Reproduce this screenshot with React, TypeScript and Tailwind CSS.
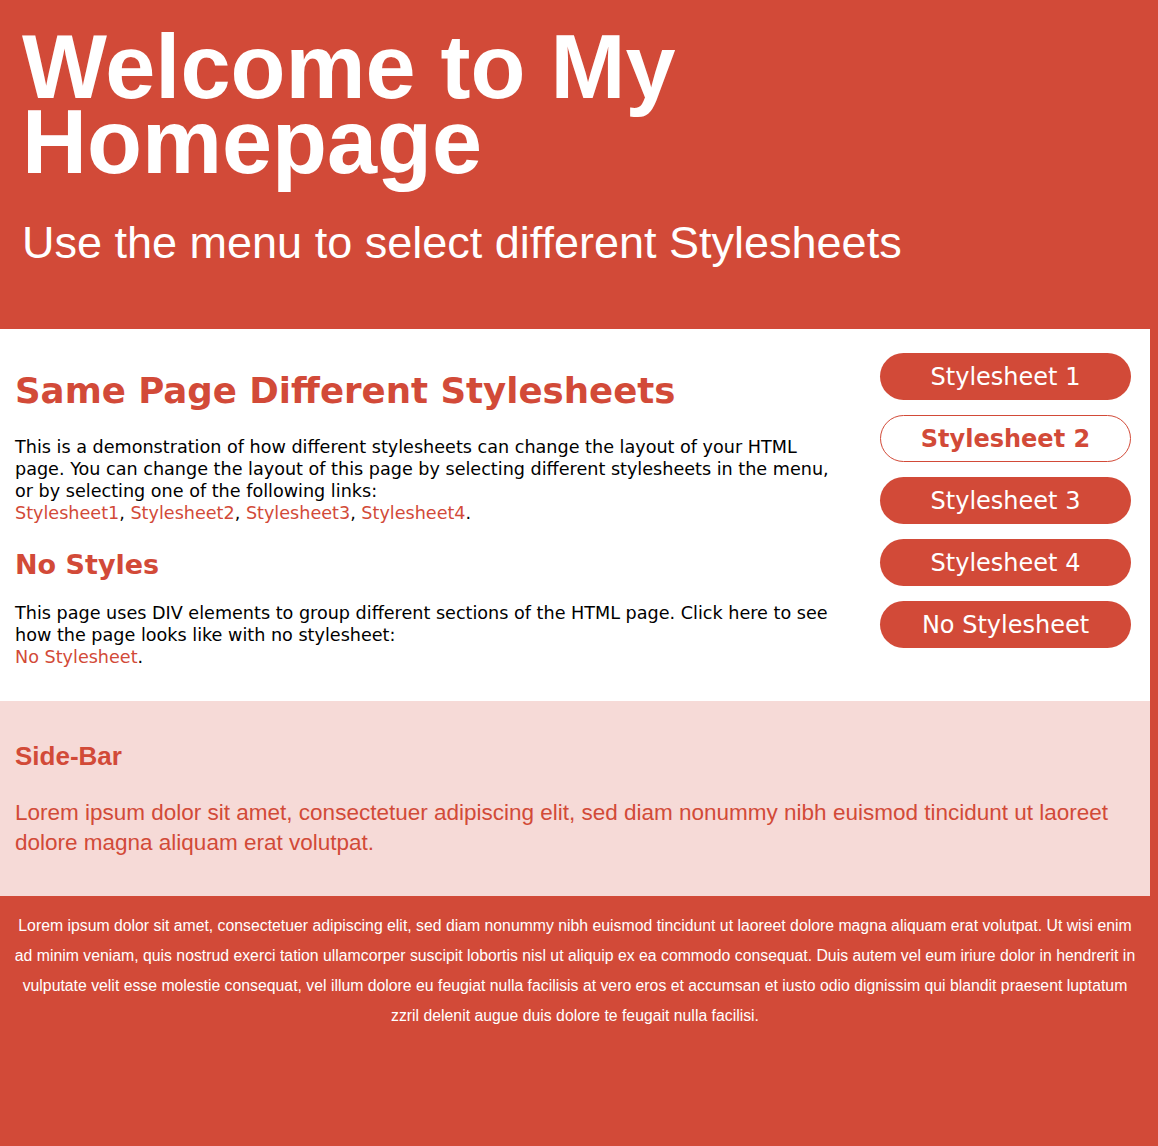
export default function App() {
  const links = ["Stylesheet1", "Stylesheet2", "Stylesheet3", "Stylesheet4"];
  const menu = ["Stylesheet 1", "Stylesheet 2", "Stylesheet 3", "Stylesheet 4", "No Stylesheet"];

  return (
    <div className="min-h-[1146px] bg-[#d24a38] font-['Liberation_Sans',Arial,sans-serif]">
      <div className="w-[1150px]">
        {/* Header */}
        <header className="h-[329px] px-[22px] pt-[30px] text-white">
          <h1 className="max-w-[700px] text-[90px] font-bold leading-[75px]">Welcome to My Homepage</h1>
          <p className="mt-[37px] text-[45px] leading-[52px]">Use the menu to select different Stylesheets</p>
        </header>

        {/* Main content + menu */}
        <main className="flex bg-white pb-[33px] font-['DejaVu_Sans',Verdana,sans-serif]">
          <div className="w-[845px] pl-[15px] pt-[40px]">
            <h2 className="whitespace-nowrap text-[35.6px] font-bold leading-[44px] text-[#d24a38]">
              Same Page Different Stylesheets
            </h2>
            <p className="mt-[23px] text-[17.6px] leading-[22px] text-black">
              This is a demonstration of how different stylesheets can change the layout of your HTML page. You can
              change the layout of this page by selecting different stylesheets in the menu, or by selecting one of the
              following links:
              <br />
              {links.map((l, i) => (
                <span key={l}>
                  <a href="#" className="text-[#d24a38]">{l}</a>
                  {i < links.length - 1 ? ", " : "."}
                </span>
              ))}
            </p>
            <h3 className="mt-[24px] text-[27px] font-bold leading-[34px] text-[#d24a38]">No Styles</h3>
            <p className="mt-[20px] text-[17.6px] leading-[22px] text-black">
              This page uses DIV elements to group different sections of the HTML page. Click here to see how the page
              looks like with no stylesheet:
              <br />
              <a href="#" className="text-[#d24a38]">No Stylesheet</a>.
            </p>
          </div>

          <nav className="ml-[35px] flex flex-col gap-[15px] pt-[24px]">
            {menu.map((m, i) => (
              <a
                key={m}
                href="#"
                className={
                  i === 1
                    ? "flex h-[47px] w-[251px] items-center justify-center rounded-full border border-[#d24a38] bg-white text-[24px] font-bold text-[#d24a38]"
                    : "flex h-[47px] w-[251px] items-center justify-center rounded-full bg-[#d24a38] text-[24px] text-white"
                }
              >
                {m}
              </a>
            ))}
          </nav>
        </main>

        {/* Side bar */}
        <aside className="h-[195px] bg-[#f6dad7] px-[15px] pt-[40px] text-[#d24a38]">
          <h3 className="text-[26px] font-bold leading-[30px]">Side-Bar</h3>
          <p className="mt-[27px] text-[22.5px] leading-[30px]">
            Lorem ipsum dolor sit amet, consectetuer adipiscing elit, sed diam nonummy nibh euismod tincidunt ut laoreet
            dolore magna aliquam erat volutpat.
          </p>
        </aside>

        {/* Footer */}
        <footer className="px-[8px] pt-[15px] text-center text-[15.8px] leading-[30px] text-white">
          Lorem ipsum dolor sit amet, consectetuer adipiscing elit, sed diam nonummy nibh euismod tincidunt ut laoreet
          dolore magna aliquam erat volutpat. Ut wisi enim ad minim veniam, quis nostrud exerci tation ullamcorper
          suscipit lobortis nisl ut aliquip ex ea commodo consequat. Duis autem vel eum iriure dolor in hendrerit in
          vulputate velit esse molestie consequat, vel illum dolore eu feugiat nulla facilisis at vero eros et accumsan
          et iusto odio dignissim qui blandit praesent luptatum zzril delenit augue duis dolore te feugait nulla
          facilisi.
        </footer>
      </div>
    </div>
  );
}
